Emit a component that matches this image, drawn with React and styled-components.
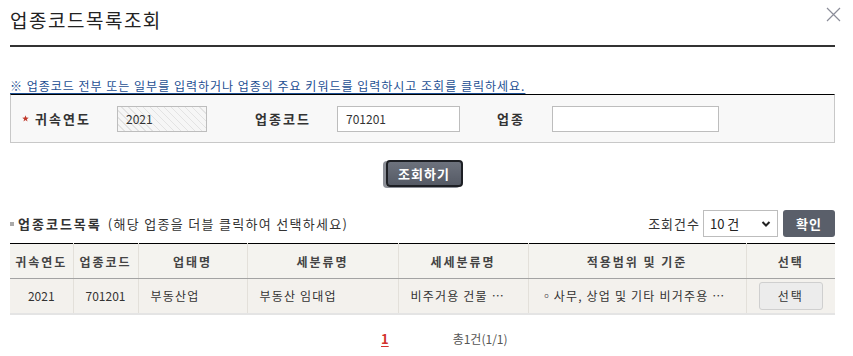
import React from "react";
import styled, { createGlobalStyle } from "styled-components";

const Global = createGlobalStyle`
  html, body { margin: 0; padding: 0; background: #fff; }
  body { font-family: "Noto Sans CJK KR", "Noto Sans", sans-serif; color: #333; }
  * { box-sizing: border-box; }
`;

const Dialog = styled.div`
  position: relative;
  width: 853px;
  padding: 0 18px 0 10px;
`;

const Header = styled.div`
  padding: 5px 0 10px;
  border-bottom: 2px solid #333;
`;

const Title = styled.h1`
  margin: 0;
  font-size: 19px;
  line-height: 30px;
  font-weight: 400;
  color: #222;
  letter-spacing: 1.5px;
`;

const CloseButton = styled.button`
  position: absolute;
  top: 6px;
  right: 12px;
  width: 16px;
  height: 16px;
  padding: 0;
  border: 0;
  background: none;
  display: flex;
  align-items: center;
  justify-content: center;
`;

const Notice = styled.p`
  margin: 31px 0 0;
  font-size: 12px;
  line-height: 16px;
  color: #1d4f93;
  letter-spacing: 1px;
  text-decoration: underline;
  text-underline-offset: 2px;
  white-space: nowrap;
`;

const SearchBox = styled.div`
  display: flex;
  align-items: center;
  padding: 10px 0 10px 11px;
  background: #f8f8f8;
  border: 1px solid #c8c8c8;
  border-top: 1px solid #000;
  height: 49px;
`;

const Star = styled.span`
  display: flex;
  width: 7px;
  margin-right: 6px;
`;

const FieldLabel = styled.label`
  flex: none;
  width: ${(p) => p.$w}px;
  margin-left: ${(p) => p.$ml || 0}px;
  font-size: 13px;
  font-weight: 700;
  letter-spacing: 2px;
  color: #333;
`;

const TextInput = styled.input`
  flex: none;
  width: ${(p) => p.$w}px;
  height: 26px;
  padding: 0 8px;
  border: 1px solid #bdbdbd;
  font-family: inherit;
  font-size: 12px;
  color: #333;
  background: ${(p) =>
    p.$readonly
      ? "repeating-linear-gradient(45deg, #f6f6f6 0px, #f6f6f6 4px, #e3e3e3 4px, #e3e3e3 5px)"
      : "#fff"};
  outline: none;
`;

const ActionRow = styled.div`
  display: flex;
  justify-content: center;
  margin-top: 17px;
`;

const SearchButton = styled.button`
  height: 27px;
  width: 77px;
  margin-left: 3px;
  border: 2px solid #1d1f24;
  border-radius: 4px;
  background: linear-gradient(#6d727d, #555a65);
  box-shadow: -3px 1px 0 #8c8f97;
  color: #fff;
  font-family: inherit;
  font-size: 13px;
  font-weight: 700;
  letter-spacing: 1px;
  padding: 0;
`;

const ListHead = styled.div`
  display: flex;
  align-items: center;
  justify-content: space-between;
  margin-top: 23px;
  height: 27px;
`;

const ListTitle = styled.div`
  display: flex;
  align-items: center;
  font-size: 13px;
  color: #333;
  letter-spacing: 1.3px;
`;

const Bullet = styled.span`
  width: 4px;
  height: 4px;
  background: #aaa;
  margin-right: 4px;
`;

const Strong = styled.strong`
  font-weight: 700;
  letter-spacing: 2px;
  margin-right: 6px;
`;

const ListTools = styled.div`
  display: flex;
  align-items: center;
`;

const CountLabel = styled.span`
  font-size: 13px;
  color: #333;
  letter-spacing: 1px;
  margin-right: 3px;
`;

const SelectBox = styled.div`
  width: 75px;
  height: 27px;
  display: flex;
  align-items: center;
  justify-content: space-between;
  padding: 0 6px 0 6px;
  border: 1px solid #bdbdbd;
  background: #fff;
  font-size: 13px;
  color: #222;
`;

const DarkButton = styled.button`
  width: 52px;
  height: 27px;
  margin-left: 5px;
  border: 0;
  border-radius: 3px;
  background: #5a5f6a;
  color: #fff;
  font-family: inherit;
  font-size: 13px;
  font-weight: 700;
  letter-spacing: 1px;
  padding: 0;
`;

const Table = styled.table`
  width: 825px;
  margin-top: 6px;
  border-collapse: collapse;
  table-layout: fixed;
  border-top: 1px solid #000;
`;

const Th = styled.th`
  height: 35px;
  padding: 0;
  background: #f4f3ef;
  border-bottom: 1px solid #a3a3a3;
  border-left: 1px solid #e3e0da;
  &:first-child { border-left: 0; }
  font-size: 12px;
  font-weight: 700;
  letter-spacing: 2px;
  color: #444;
  text-align: center;
  white-space: nowrap;
`;

const Td = styled.td`
  height: 35px;
  padding: 0 ${(p) => (p.$align === "left" ? "12px" : "0")};
  background: #f3f1ed;
  border-bottom: 2px solid #e4e4e4;
  border-left: 1px solid #e3e0da;
  &:first-child { border-left: 0; }
  font-size: 12px;
  letter-spacing: ${(p) => (p.$num ? "0" : "1.2px")};
  color: #333;
  text-align: ${(p) => p.$align || "center"};
  white-space: nowrap;
  overflow: hidden;
`;

const RowButton = styled.button`
  width: 64px;
  height: 28px;
  border: 1px solid #cfcfcf;
  border-radius: 3px;
  background: #ececec;
  font-family: inherit;
  font-size: 12px;
  letter-spacing: 2px;
  color: #333;
  padding: 0;
`;

const Pager = styled.div`
  display: flex;
  align-items: center;
  margin-top: 16px;
  padding-left: 371px;
  height: 16px;
`;

const PageNum = styled.a`
  font-size: 13px;
  font-weight: 700;
  color: #d2322d;
  text-decoration: underline;
  text-underline-offset: 2px;
`;

const Total = styled.span`
  margin-left: 64px;
  font-size: 12px;
  color: #555;
`;

const cols = [63, 65, 109, 151, 130, 218, 89];

export default function App() {
  return (
    <>
      <Global />
      <Dialog>
        <Header>
          <Title>업종코드목록조회</Title>
        </Header>
        <CloseButton aria-label="닫기">
          <svg width="15" height="15" viewBox="0 0 15 15">
            <path d="M1 1 L14 14 M14 1 L1 14" stroke="#8b8d99" strokeWidth="1.2" fill="none" />
          </svg>
        </CloseButton>

        <Notice>※ 업종코드 전부 또는 일부를 입력하거나 업종의 주요 키워드를 입력하시고 조회를 클릭하세요.</Notice>

        <SearchBox>
          <Star>
            <svg width="7" height="7" viewBox="0 0 10 10">
              <path d="M5 0.5 L6.2 3.7 L9.6 3.8 L6.9 5.9 L7.9 9.3 L5 7.3 L2.1 9.3 L3.1 5.9 L0.4 3.8 L3.8 3.7 Z" fill="#c0392b" />
            </svg>
          </Star>
          <FieldLabel $w={82}>귀속연도</FieldLabel>
          <TextInput $w={90} $readonly readOnly value="2021" />
          <FieldLabel $w={82} $ml={48}>업종코드</FieldLabel>
          <TextInput $w={123} defaultValue="701201" />
          <FieldLabel $w={55} $ml={37}>업종</FieldLabel>
          <TextInput $w={167} defaultValue="" />
        </SearchBox>

        <ActionRow>
          <SearchButton>조회하기</SearchButton>
        </ActionRow>

        <ListHead>
          <ListTitle>
            <Bullet />
            <Strong>업종코드목록</Strong>
            <span>(해당 업종을 더블 클릭하여 선택하세요)</span>
          </ListTitle>
          <ListTools>
            <CountLabel>조회건수</CountLabel>
            <SelectBox>
              <span>10 건</span>
              <svg width="10" height="10" viewBox="0 0 10 10">
                <path d="M1.5 3 L5 6.5 L8.5 3" stroke="#222" strokeWidth="2" fill="none" />
              </svg>
            </SelectBox>
            <DarkButton>확인</DarkButton>
          </ListTools>
        </ListHead>

        <Table>
          <colgroup>
            {cols.map((w, i) => (
              <col key={i} style={{ width: w }} />
            ))}
          </colgroup>
          <thead>
            <tr>
              <Th>귀속연도</Th>
              <Th>업종코드</Th>
              <Th>업태명</Th>
              <Th>세분류명</Th>
              <Th>세세분류명</Th>
              <Th>적용범위 및 기준</Th>
              <Th>선택</Th>
            </tr>
          </thead>
          <tbody>
            <tr>
              <Td $num>2021</Td>
              <Td $num>701201</Td>
              <Td $align="left">부동산업</Td>
              <Td $align="left">부동산 임대업</Td>
              <Td $align="left">비주거용 건물 …</Td>
              <Td $align="left">◦사무, 상업 및 기타 비거주용 …</Td>
              <Td>
                <RowButton>선택</RowButton>
              </Td>
            </tr>
          </tbody>
        </Table>

        <Pager>
          <PageNum>1</PageNum>
          <Total>총1건(1/1)</Total>
        </Pager>
      </Dialog>
    </>
  );
}
